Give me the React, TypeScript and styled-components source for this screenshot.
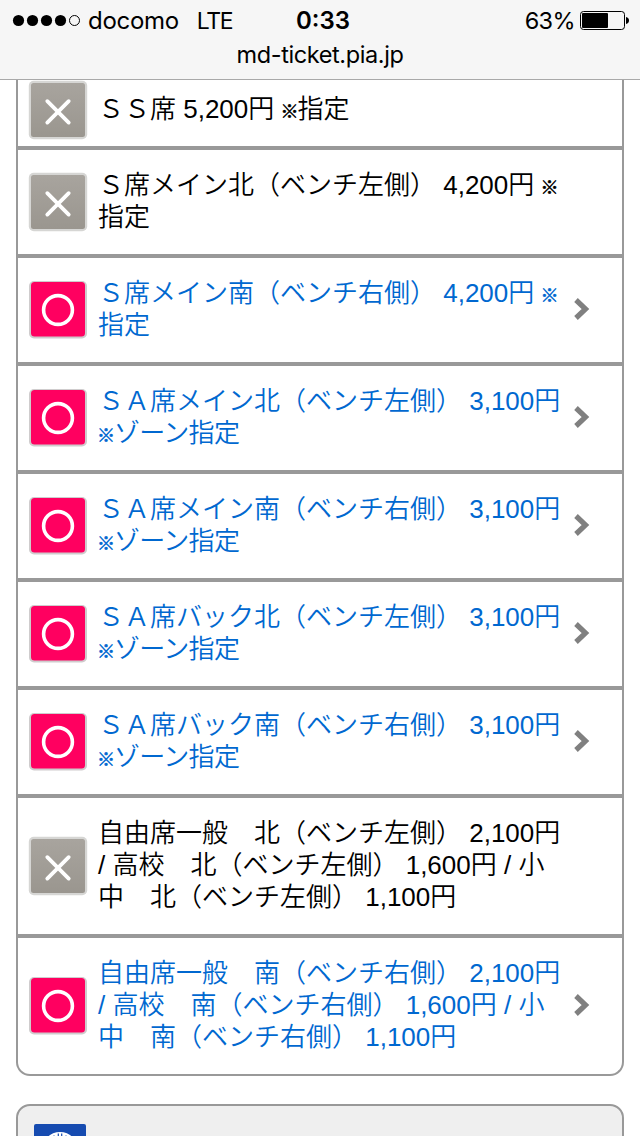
import React from "react";
import styled, { createGlobalStyle } from "styled-components";

const GlobalStyle = createGlobalStyle`
  * { box-sizing: border-box; }
  body { margin: 0; background: #fff; overflow: hidden; }
`;

const Screen = styled.div`
  width: 640px;
  height: 1136px;
  overflow: hidden;
  display: flex;
  flex-direction: column;
  background: #fff;
  font-family: "Liberation Sans", "Noto Sans CJK JP", sans-serif;
`;

const Header = styled.header`
  flex: none;
  height: 80px;
  background: #f6f6f6;
  border-bottom: 1px solid #a9a9a9;
  font-family: Inter, sans-serif;
  color: #000;
`;

const StatusBar = styled.div`
  height: 40px;
  padding: 1px 11px 0 12px;
  display: grid;
  grid-template-columns: 284px auto 1fr;
  align-items: center;
`;

const Carrier = styled.div`
  display: flex;
  align-items: center;
`;

const Label = styled.span<{ $ls?: number; $size?: number; $ml?: number; $weight?: number }>`
  font-size: ${(p) => p.$size ?? 24}px;
  font-weight: ${(p) => p.$weight ?? 400};
  letter-spacing: ${(p) => p.$ls ?? 0}px;
  margin-left: ${(p) => p.$ml ?? 0}px;
  line-height: 30px;
  white-space: nowrap;
`;

const Power = styled.div`
  display: flex;
  align-items: center;
  justify-content: flex-end;
  gap: 5px;
`;

const Address = styled.div`
  height: 30px;
  line-height: 30px;
  text-align: center;
  font-size: 23.5px;
  letter-spacing: -0.4px;
`;

const Page = styled.main`
  flex: 1;
  min-height: 0;
  overflow: hidden;
  padding: 0 16px;
  display: flex;
  flex-direction: column;
  gap: 28px;
`;

const SeatList = styled.ul`
  flex: none;
  list-style: none;
  margin: 0;
  padding: 0;
  border: 2px solid #999;
  border-top: 0;
  border-radius: 0 0 14px 14px;
`;

const SeatRow = styled.li<{ $open: boolean; $clipped: boolean }>`
  display: flex;
  align-items: center;
  padding: ${(p) => (p.$clipped ? "14px" : "20px")} 30px 20px 10px;
  height: ${(p) => (p.$clipped ? "66px" : "auto")};
  color: ${(p) => (p.$open ? "#0068d0" : "#000")};
  & + & { border-top: 4px solid #999; }
`;

const SeatText = styled.div`
  flex: 1;
  margin: -1px 0 1px 10px;
  font-size: 26px;
  line-height: 32px;
  font-weight: 350;
`;

const Line = styled.div<{ $note: boolean }>`
  height: 32px;
  white-space: pre;
  letter-spacing: ${(p) => (p.$note ? "-0.7px" : "0")};
`;

const Mark = styled.span<{ $leading: boolean }>`
  display: inline-block;
  width: ${(p) => (p.$leading ? 17 : 17)}px;
  margin-left: -1px;
  font-size: 18px;
  line-height: 1;
  letter-spacing: -1px;
  -webkit-text-stroke: 0.6px currentColor;
`;

const InfoPanel = styled.section`
  flex: none;
  height: 100px;
  padding: 18px 16px;
  border: 2px solid #999;
  border-radius: 14px;
  background: #efefef;
`;

const IconSvg = styled.svg<{ $soft?: boolean }>`
  display: block;
  flex: none;
  overflow: visible;
  filter: ${(p) => (p.$soft ? "blur(0.6px)" : "none")};
`;

function Closed() {
  return (
    <IconSvg $soft width="60" height="60" viewBox="0 0 60 60">
      <defs>
        <linearGradient id="grey" x1="0" y1="0" x2="0" y2="1">
          <stop offset="0" stopColor="#a8a49e" />
          <stop offset="1" stopColor="#9a968f" />
        </linearGradient>
      </defs>
      <rect x="0.8" y="0.8" width="58.4" height="58.4" rx="5" fill="#d6d6d4" />
      <rect x="3" y="3" width="54" height="54" rx="2.5" fill="url(#grey)" />
      <path d="M19.3 21.2 40.7 42.6M40.7 21.2 19.3 42.6" stroke="#fff" strokeWidth="3.8" strokeLinecap="round" />
    </IconSvg>
  );
}

function Open() {
  return (
    <IconSvg $soft width="60" height="60" viewBox="0 0 60 60">
      <rect x="1" y="1" width="58" height="57.5" rx="5" fill="#cfcccd" />
      <rect x="3" y="2" width="54" height="54.5" rx="3.5" fill="#ff0060" />
      <circle cx="30" cy="30" r="14.4" fill="none" stroke="#fff" strokeWidth="3.6" />
    </IconSvg>
  );
}

function Chevron() {
  return (
    <IconSvg $soft width="20" height="28" viewBox="0 0 20 28">
      <path d="M4 4 13.5 13 4 22" fill="none" stroke="#808080" strokeWidth="5.2" />
    </IconSvg>
  );
}

function Signal() {
  return (
    <IconSvg width="68" height="14" viewBox="0 0 68 14">
      {[6.5, 20.5, 34.5, 48.5].map((x) => (
        <circle key={x} cx={x} cy="6.5" r="5.6" />
      ))}
      <circle cx="62.5" cy="6.5" r="5" fill="none" stroke="#000" strokeWidth="1" />
    </IconSvg>
  );
}

function Battery() {
  return (
    <IconSvg width="49" height="20" viewBox="0 0 49 20">
      <rect x="0.5" y="0.5" width="44" height="18" rx="3" fill="none" stroke="#000" />
      <rect x="2" y="2" width="26" height="15" rx="1" />
      <path d="M46 6q3 .8 3 3.5T46 13z" />
    </IconSvg>
  );
}

function Seal() {
  return (
    <IconSvg $soft width="52" height="52" viewBox="0 0 52 52">
      <rect width="52" height="52" rx="2" fill="#164bb0" />
      <circle cx="26" cy="26" r="18" fill="#fff" />
      <path d="M20 11.5v3M24.3 9.5v5M27.7 9.5v5M32 11.5v3" stroke="#164bb0" strokeWidth="1.2" />
    </IconSvg>
  );
}

type Seat = { open: boolean; lines: string[] };

const seats: Seat[] = [
  { open: false, lines: ["ＳＳ席 5,200円 ※指定"] },
  { open: false, lines: ["Ｓ席メイン北（ベンチ左側） 4,200円 ※", "指定"] },
  { open: true, lines: ["Ｓ席メイン南（ベンチ右側） 4,200円 ※", "指定"] },
  { open: true, lines: ["ＳＡ席メイン北（ベンチ左側） 3,100円", "※ゾーン指定"] },
  { open: true, lines: ["ＳＡ席メイン南（ベンチ右側） 3,100円", "※ゾーン指定"] },
  { open: true, lines: ["ＳＡ席バック北（ベンチ左側） 3,100円", "※ゾーン指定"] },
  { open: true, lines: ["ＳＡ席バック南（ベンチ右側） 3,100円", "※ゾーン指定"] },
  { open: false, lines: ["自由席一般　北（ベンチ左側） 2,100円", "/ 高校　北（ベンチ左側） 1,600円 / 小", "中　北（ベンチ左側） 1,100円"] },
  { open: true, lines: ["自由席一般　南（ベンチ右側） 2,100円", "/ 高校　南（ベンチ右側） 1,600円 / 小", "中　南（ベンチ右側） 1,100円"] },
];

const withMarks = (text: string) =>
  text.split(/(※)/).map((part, i) =>
    part === "※" ? (
      <Mark key={i} $leading={text.startsWith("※")}>
        ※
      </Mark>
    ) : (
      part
    ),
  );

export default function App() {
  return (
    <Screen>
      <GlobalStyle />
      <Header>
        <StatusBar>
          <Carrier>
            <Signal />
            <Label $ml={8} $ls={-0.3}>docomo</Label>
            <Label $ml={18} $ls={-1.3} $size={23}>LTE</Label>
          </Carrier>
          <Label $weight={600}>0:33</Label>
          <Power>
            <Label $size={23.5} $ls={-0.6}>63%</Label>
            <Battery />
          </Power>
        </StatusBar>
        <Address>md-ticket.pia.jp</Address>
      </Header>
      <Page>
        <SeatList>
          {seats.map((seat, i) => (
            <SeatRow key={i} $open={seat.open} $clipped={i === 0}>
              {seat.open ? <Open /> : <Closed />}
              <SeatText>
                {seat.lines.map((line) => (
                  <Line key={line} $note={line.startsWith("※")}>
                    {withMarks(line)}
                  </Line>
                ))}
              </SeatText>
              {seat.open && <Chevron />}
            </SeatRow>
          ))}
        </SeatList>
        <InfoPanel>
          <Seal />
        </InfoPanel>
      </Page>
    </Screen>
  );
}
